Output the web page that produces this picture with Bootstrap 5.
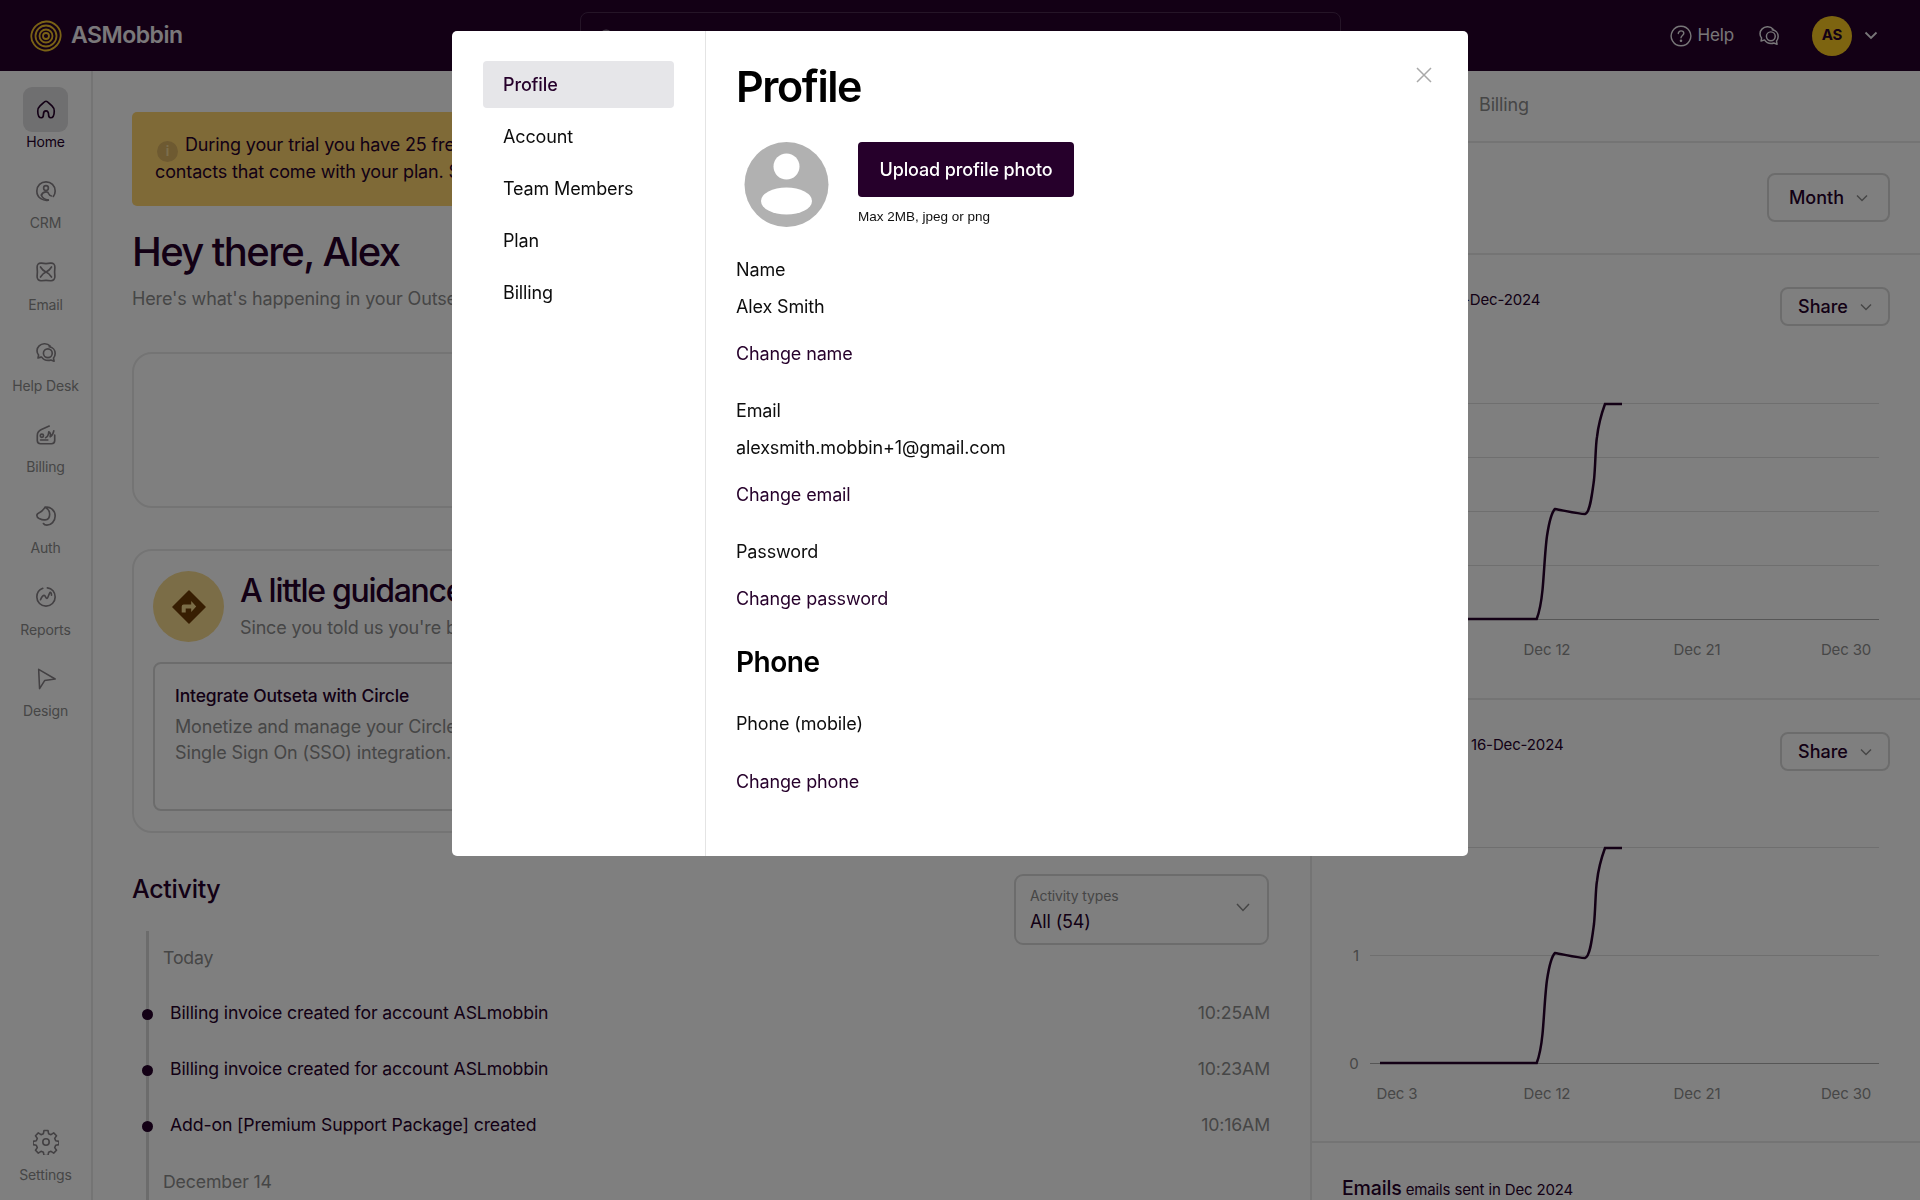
<!DOCTYPE html>
<html lang="en">
<head>
  <meta charset="UTF-8" />
  <meta name="viewport" content="width=device-width, initial-scale=1.0" />
  <title>ASMobbin - Profile</title>
  <link href="https://cdn.jsdelivr.net/npm/bootstrap@5.3.3/dist/css/bootstrap.min.css" rel="stylesheet">
  <style>
    :root { --plum: #26002b; --line: #e9e9e9; --muted: #8c8c8c; }
    html, body { height: 100%; }
    body { font-family: Inter, "Liberation Sans", sans-serif; font-size: 18px; letter-spacing: -.14px; color: var(--plum); overflow: hidden; }
    .shell { height: 100vh; }

    /* top bar */
    .topbar { height: 71px; flex: none; background: var(--plum); color: #fff; padding: 0 42px 0 30px; }
    .brand-name { font-size: 23px; font-weight: 600; letter-spacing: -.5px; margin-left: 9px; color: #f4f0f4; }
    .search-box { position: absolute; left: 580px; top: 12px; width: 761px; height: 50px; border: 1px solid #4a2a4f; border-radius: 8px; padding: 0 16px; }
    .top-help { color: #f0edf0; margin-right: 24px; gap: 5px; font-size: 17px; }
    .top-avatar { width: 40px; height: 40px; border-radius: 50%; background: #fac820; color: #26002b; font-size: 15px; font-weight: 700; margin: 0 12px 0 32px; }

    /* left rail */
    .rail { width: 93px; flex: none; border-right: 2px solid var(--line); padding: 16px 0 15px; }
    .rail-item { height: 81.3px; color: var(--muted); font-size: 14px; line-height: 20.5px; }
    .rail-icon { width: 45px; height: 45px; border-radius: 9px; }
    .rail-item.is-active { color: var(--plum); }
    .rail-item.is-active .rail-icon { background: #dfdee0; color: var(--plum); }
    .rail-item svg { color: #878287; width: 22px; height: 22px; }
    .rail-item.is-active svg { color: var(--plum); }
    .rail-item.rail-last { height: 65px; }
    .rail-item.rail-last svg { width: 26px; height: 26px; }

    /* main column */
    .main-col { width: 1219px; flex: none; padding: 41px 40px 0 39px; border-right: 2px solid var(--line); overflow: hidden; }
    .trial-note { height: 94px; background: #ffd56e; border-radius: 5px; padding: 19px 23px 0; line-height: 27px; color: #26002b; }
    .note-dot { display: inline-flex; width: 21px; height: 21px; border-radius: 50%; background: #dcb463; color: #f7dc9a; font-size: 13px; font-weight: 700; line-height: 1; align-items: center; justify-content: center; vertical-align: -5px; margin: -4px 7px -4px 2px; }
    .hello { font-size: 40px; font-weight: 500; line-height: 48px; letter-spacing: -1.6px; margin: 22px 0 0; }
    .hello-sub { color: var(--muted); font-size: 18px; line-height: 24px; margin-top: 11px; }
    .blank-panel { height: 156px; margin-top: 41px; border: 2px solid var(--line); border-radius: 20px; }
    .guide-panel { height: 284px; margin-top: 41px; border: 2px solid var(--line); border-radius: 20px; padding: 20px 19px; }
    .guide-circle { width: 71px; height: 71px; border-radius: 50%; background: #f7da8e; margin-right: 16px; flex: none; }
    .guide-title { font-size: 32px; font-weight: 500; line-height: 40px; letter-spacing: -1.3px; }
    .guide-sub { color: var(--muted); font-size: 18px; line-height: 24px; margin-top: 5px; }
    .guide-card { height: 149px; margin-top: 20px; border: 2px solid #d9d9d9; border-radius: 8px; padding: 20px 20px; }
    .guide-card b { font-weight: 500; font-size: 17.5px; line-height: 24px; display: block; }
    .guide-card p { color: var(--muted); font-size: 18px; line-height: 26px; margin: 6px 0 0; white-space: nowrap; }
    .activity-row { margin-top: 41px; height: 71px; }
    .activity-title { font-size: 25px; font-weight: 500; letter-spacing: -.3px; line-height: 34px; margin-top: -2px; }
    .type-select { width: 255px; height: 71px; border: 2px solid #d9d9d9; border-radius: 9px; padding: 11px 14px; margin-right: 1px; position: relative; }
    .type-label { font-size: 14px; line-height: 18px; color: var(--muted); }
    .type-value { font-size: 18px; line-height: 24px; margin-top: 5px; }
    .type-chev { position: absolute; right: 17px; top: 27px; }
    .feed { margin: -14px 0 0 14px; padding-left: 14px; border-left: 3px solid #d9d9d9; height: 300px; }
    .feed-day { color: var(--muted); line-height: 24px; font-size: 17.7px; }
    .feed-first { padding-top: 15px; height: 54.5px; }
    .feed-next { padding-top: 16px; }
    .feed-row { height: 56px; position: relative; padding-left: 7px; color: #26002b; font-size: 17.7px; }
    .feed-row::before { content: ""; position: absolute; left: -21px; top: 50%; margin-top: -5px; width: 11px; height: 11px; border-radius: 50%; background: #26002b; }
    .feed-time { color: var(--muted); }

    /* right column */
    .side-col { flex: 1; min-width: 0; overflow: hidden; }
    .side-tabs { height: 72px; border-bottom: 2px solid var(--line); padding: 0 0 4px 167px; color: var(--muted); }
    .side-filter { height: 112px; border-bottom: 2px solid var(--line); padding: 30px 30px 0 0; }
    .pick-btn { border: 2px solid #d9d9d9; border-radius: 8px; font-size: 18px; font-weight: 500; color: #26002b; padding: 0; display: inline-flex; align-items: center; justify-content: center; gap: 12px; background: transparent; }
    .pick-month { width: 123px; height: 49px; }
    .pick-share { width: 110px; height: 39px; }
    .pick-btn svg { color: var(--muted); }
    .chart-block { height: 445px; border-bottom: 2px solid var(--line); padding: 32px 30px 0 32px; }
    .chart-head { height: 39px; color: #26002b; font-size: 15px; line-height: 26px; }
    .chart-svg { display: block; width: 609px; height: 280px; margin: 69px 0 0 -33px; }
    .chart-lower { height: 443px; }
    .chart-lower .chart-svg { margin-top: 68px; }
    .chart-svg text { font-family: Inter, "Liberation Sans", sans-serif; font-size: 15px; fill: #8e8e8e; }
    .mail-head { padding: 33px 0 0 30px; font-size: 15px; line-height: 24px; white-space: nowrap; }
    .mail-head b { font-size: 19.5px; font-weight: 500; }
    .head-first { margin-left: 113px; }
    .head-second { margin-left: 127px; }

    /* settings dialog */
    .settings-dialog { max-width: 1016px; margin: 31px auto 0; }
    .settings-dialog .modal-content { height: 825px; border: 0; border-radius: 5px; color: #000; position: relative; }
    .settings-nav { width: 254px; flex: none; border-right: 1px solid #e4e4e4; padding: 30px 31px 0 31px; }
    .settings-nav a { display: flex; align-items: center; height: 47px; margin-bottom: 5px; padding-left: 20px; color: #0c0c0c; font-size: 18px; text-decoration: none; border-radius: 4px; }
    .settings-nav a.is-current { background: #e6e6e9; color: var(--plum); font-weight: 500; }
    .settings-pane { padding: 29px 0 0 30px; }
    .pane-title { font-size: 43px; font-weight: 600; line-height: 52px; letter-spacing: -1.4px; margin: 0 0 30px; color: #000; }
    .photo-row { height: 85px; }
    .photo-circle { margin-left: 8px; width: 85px; height: 85px; flex: none; }
    .photo-side { margin-left: 29px; }
    .upload-btn { width: 216px; height: 55px; background: var(--plum); color: #fff; font-size: 18px; font-weight: 500; letter-spacing: -.14px; border: 0; border-radius: 4px; padding: 0; }
    .upload-btn:hover { background: var(--plum); color: #fff; }
    .photo-hint { font-family: "Liberation Sans", Arial, sans-serif; font-size: 13.5px; letter-spacing: 0; line-height: 16px; margin-top: 12px; color: #111; }
    .field-row { line-height: 24px; color: #0d0d0d; }
    .change-link { display: block; line-height: 24px; color: var(--plum); text-decoration: none; }
    .gap-31 { margin-top: 31px; } .gap-13 { margin-top: 13px; } .gap-23 { margin-top: 23px; }
    .gap-33 { margin-top: 33px; } .gap-34 { margin-top: 34px; }
    .phone-title { font-size: 28px; font-weight: 600; letter-spacing: -.5px; line-height: 34px; margin: 34px 0 0; color: #000; }
    .dialog-close { position: absolute; right: 36px; top: 36px; background: none; border: 0; padding: 0; line-height: 0; color: #a9a9a9; }
  </style>
</head>
<body>
  <div class="shell d-flex flex-column">
    <!-- top bar -->
    <header class="topbar d-flex align-items-center position-relative">
      <svg width="32" height="32" viewBox="0 0 32 32" fill="none" stroke="#f5c52a" stroke-width="1.8">
        <path d="M16 1.500c4-.2 8 1.600 11 4.600 3 3.200 4 6.800 3.600 10.600-.4 4.200-2.600 8-6 10.600-3.200 2.600-7 3.600-10.800 3-4-.6-7.600-2.800-9.800-6C1.600 21.200.8 17.400 1.600 13.600 2.400 9.800 4.600 6.600 8 4.200 10.400 2.600 13 1.600 16 1.500z"/>
        <circle cx="16" cy="16" r="10.500"/>
        <circle cx="16" cy="16" r="6.500"/>
        <circle cx="16" cy="16" r="3"/>
      </svg>
      <span class="brand-name">ASMobbin</span>
      <div class="search-box d-flex align-items-center">
        <svg width="20" height="20" viewBox="0 0 24 24" fill="none" stroke="#8b7a8e" stroke-width="2"><circle cx="11" cy="11" r="7"/><path d="M16 16l5 5"/></svg>
      </div>
      <div class="ms-auto d-flex align-items-center">
        <div class="top-help d-flex align-items-center">
          <svg width="22" height="22" viewBox="0 0 22 22" fill="none" stroke="currentColor" stroke-width="1.400"><path d="M11 1.200a9.800 9.800 0 1 1-.01 0z"/><path d="M8.300 8.600c0-1.600 1.200-2.700 2.800-2.700s2.700 1 2.700 2.400c0 2.200-2.800 2.300-2.800 4.500" stroke-linecap="round"/><circle cx="11" cy="15.800" r=".6" fill="currentColor"/></svg>
          <span>Help</span>
        </div>
        <svg width="22" height="22" viewBox="0 0 24 24" fill="none" stroke="#f0edf0" stroke-width="1.600" stroke-linejoin="round" stroke-linecap="round"><path d="M16.500 4.500C15 2.800 12.500 1.700 10 1.900 5.800 2.200 2.200 5.300 2.200 9.500c0 1.800.6 3.400 1.700 4.700l-.6 3.300 3.200-1"/><circle cx="14" cy="12.300" r="4.800"/><path d="M15.500 5.200c3.800.5 6.500 3.600 6.500 7.300 0 1.900-.6 3.600-1.800 5l.6 3.500-3.500-1.400c-1 .4-2 .5-3 .5-3 0-5.600-1.400-7-3.600"/></svg>
        <div class="top-avatar d-flex align-items-center justify-content-center">AS</div>
        <svg width="14" height="9" viewBox="0 0 14 9" fill="none" stroke="#f0edf0" stroke-width="1.800"><path d="M1.500 1.500L7 7l5.500-5.500"/></svg>
      </div>
    </header>

    <div class="d-flex flex-grow-1 overflow-hidden">
      <!-- left rail -->
      <nav class="rail d-flex flex-column align-items-stretch">
        <div class="rail-item is-active d-flex flex-column align-items-center">
          <div class="rail-icon d-flex align-items-center justify-content-center">
            <svg viewBox="0 0 24 24" fill="none" stroke="currentColor" stroke-width="1.800" stroke-linejoin="round" stroke-linecap="round"><path d="M12 2.500c1 0 2 .8 3.500 2.200l3 2.800c1.700 1.600 2.500 3 2.500 5.500 0 4-.8 7.500-4 7.500-2 0-2.200-1.500-2.200-3.500 0-2.200-.9-4-2.800-4s-2.800 1.800-2.800 4c0 2-.2 3.500-2.200 3.500-3.200 0-4-3.500-4-7.500 0-2.500.8-3.900 2.500-5.500l3-2.800c1.500-1.400 2.500-2.200 3.500-2.200z"/></svg>
          </div>
          <span>Home</span>
        </div>
        <div class="rail-item d-flex flex-column align-items-center">
          <div class="rail-icon d-flex align-items-center justify-content-center">
            <svg viewBox="0 0 24 24" fill="none" stroke="currentColor" stroke-width="1.800" stroke-linecap="round" stroke-linejoin="round"><path d="M14.500 22C9.500 23 2 20 2 12 2 6 6.500 2 12 2s10 4 10 10c0 2.500-.8 4.500-2 6"/><circle cx="12" cy="8.800" r="2.600"/><path d="M7 16.500c1-2.500 2.500-3.500 5-3.500 1.500 0 2.500.6 3 2 .5 1.200 1.500 2.500 3 2.500"/><path d="M7 16.500c.5 2 2.500 4.500 7.500 5.500"/></svg>
          </div>
          <span>CRM</span>
        </div>
        <div class="rail-item d-flex flex-column align-items-center">
          <div class="rail-icon d-flex align-items-center justify-content-center">
            <svg viewBox="0 0 24 24" fill="none" stroke="currentColor" stroke-width="1.800" stroke-linecap="round" stroke-linejoin="round"><path d="M7 2.300c3 .6 7 .6 10 0 3-.4 4.800 1.600 4.700 4.500-.4 3.500-.4 7 0 10 .2 3-1.700 5-4.700 4.700-3-.5-7-.5-10 0-3 .3-4.900-1.700-4.700-4.700.4-3 .4-6.500 0-10C2.200 3.900 4 1.900 7 2.300z"/><path d="M6 6.500c1.500 2.500 3.500 4.500 6 5.500 2.500-1 4.500-3 6-5.500"/><path d="M6 17.500c1.500-2.500 3.500-4.500 6-5.500 2.500 1 4.500 3 6 5.500"/></svg>
          </div>
          <span>Email</span>
        </div>
        <div class="rail-item d-flex flex-column align-items-center">
          <div class="rail-icon d-flex align-items-center justify-content-center">
            <svg viewBox="0 0 24 24" fill="none" stroke="currentColor" stroke-width="1.800" stroke-linejoin="round" stroke-linecap="round"><path d="M16.500 4.500C15 2.800 12.500 1.700 10 1.900 5.800 2.200 2.200 5.300 2.200 9.500c0 1.800.6 3.400 1.700 4.700l-.6 3.300 3.200-1"/><circle cx="14" cy="12.300" r="4.800"/><path d="M15.500 5.200c3.800.5 6.500 3.600 6.500 7.300 0 1.900-.6 3.600-1.800 5l.6 3.500-3.500-1.400c-1 .4-2 .5-3 .5-3 0-5.600-1.400-7-3.600"/></svg>
          </div>
          <span>Help Desk</span>
        </div>
        <div class="rail-item d-flex flex-column align-items-center">
          <div class="rail-icon d-flex align-items-center justify-content-center">
            <svg viewBox="0 0 24 24" fill="none" stroke="currentColor" stroke-width="1.800" stroke-linejoin="round" stroke-linecap="round"><path d="M15.500 2.200L7 6C4.500 7.200 2.500 9 2.500 12.500V18c0 2.200 1.200 3.500 3.500 3.500h12c2.200 0 3.500-1.300 3.500-3.500v-6"/><circle cx="7.500" cy="12.800" r="1.800"/><path d="M11.500 15c2.200-.8 3.300-2.800 3.500-6.500 1.800.8 2.300 2.800 1.500 5.500 2-1.200 3.500-3.800 4-6.500"/><path d="M6 17.500h8"/></svg>
          </div>
          <span>Billing</span>
        </div>
        <div class="rail-item d-flex flex-column align-items-center">
          <div class="rail-icon d-flex align-items-center justify-content-center">
            <svg viewBox="0 0 24 24" fill="none" stroke="currentColor" stroke-width="1.800" stroke-linecap="round" stroke-linejoin="round"><path d="M11 2.500c5.500-1.200 11 3.200 11 9.500 0 5.800-4.500 10-9 10-1.800 0-3.200-.7-3.800-1.800"/><path d="M11 2.500c3 1.500 5 4.300 5 7.500 0 3.500-2 6-5 6.200-2 .2-4.500-.5-6.500-1.500C2.800 13.800 2 12.800 2 11.500 2 9.800 3.800 8.800 5.500 8 7.800 7 9 5 11 2.500z"/></svg>
          </div>
          <span>Auth</span>
        </div>
        <div class="rail-item d-flex flex-column align-items-center">
          <div class="rail-icon d-flex align-items-center justify-content-center">
            <svg viewBox="0 0 24 24" fill="none" stroke="currentColor" stroke-width="1.800" stroke-linecap="round" stroke-linejoin="round"><path d="M13.500 2C18.500 2.500 22 6.500 22 12c0 5.500-4.500 10-10 10S2 17.500 2 12C2 7.500 4.500 4 8.500 2.500"/><path d="M6 15c1-2.500 2.500-4.800 4-4.800 1.500 0 1.500 3.300 3 3.300s2-5 3.300-6.500c1.200-.8 1.700 1.500 1.700 3"/></svg>
          </div>
          <span>Reports</span>
        </div>
        <div class="rail-item d-flex flex-column align-items-center">
          <div class="rail-icon d-flex align-items-center justify-content-center">
            <svg viewBox="0 0 24 24" fill="none" stroke="currentColor" stroke-width="1.700" stroke-linejoin="round"><path d="M4 1.500l18 10.500-11.500 1.700L5 22.500z"/></svg>
          </div>
          <span>Design</span>
        </div>
        <div class="rail-item rail-last mt-auto d-flex flex-column align-items-center">
          <div class="rail-icon d-flex align-items-center justify-content-center">
            <svg viewBox="0 0 26 26" fill="none" stroke="currentColor" stroke-width="1.600" stroke-linejoin="round"><circle cx="13" cy="13" r="3.200"/><path d="M11 1.500h4l.6 3.200 2.400 1 2.700-1.800 2.800 2.800-1.800 2.700 1 2.400 3.200.6v3.200l-3.200.6-1 2.400 1.800 2.700-2.800 2.800-2.700-1.800-2.400 1-.6 3.200h-4l-.6-3.200-2.400-1-2.700 1.800-2.800-2.800 1.800-2.700-1-2.400-3.200-.6v-3.200l3.200-.6 1-2.400-1.800-2.700 2.800-2.800 2.700 1.800 2.400-1z"/></svg>
          </div>
          <span>Settings</span>
        </div>
      </nav>

      <!-- main column -->
      <main class="main-col">
        <div class="trial-note">
          <span class="note-dot">i</span>During your trial you have 25 free contacts to try things out.<br>
          contacts that come with your plan. See your plan for details.
        </div>
        <h1 class="hello">Hey there, Alex</h1>
        <div class="hello-sub">Here's what's happening in your Outseta account.</div>
        <div class="blank-panel"></div>
        <div class="guide-panel">
          <div class="d-flex">
            <div class="guide-circle d-flex align-items-center justify-content-center">
              <svg width="34" height="34" viewBox="0 0 34 34"><path d="M17 1l16 16-16 16L1 17z" fill="#6f3c05" stroke="#6f3c05" stroke-linejoin="round" stroke-width="1.500"/><path d="M9.700 22.400v-6a2 2 0 0 1 2-2h7.500v-3.500l5 5.500-5 5.500v-3.500h-5.500v4z" fill="#f7da8e"/></svg>
            </div>
            <div>
              <div class="guide-title">A little guidance to get you going</div>
              <div class="guide-sub">Since you told us you're building a community</div>
            </div>
          </div>
          <div class="guide-card">
            <b>Integrate Outseta with Circle</b>
            <p>Monetize and manage your Circle community with<br>Single Sign On (SSO) integration.</p>
          </div>
        </div>
        <div class="activity-row d-flex justify-content-between align-items-start">
          <div class="activity-title">Activity</div>
          <div class="type-select">
            <div class="type-label">Activity types</div>
            <div class="type-value">All (54)</div>
            <svg class="type-chev" width="14" height="9" viewBox="0 0 14 9" fill="none" stroke="#8c8c8c" stroke-width="1.500"><path d="M1 1l6 6.500L13 1"/></svg>
          </div>
        </div>
        <div class="feed">
          <div class="feed-day feed-first">Today</div>
          <div class="feed-row d-flex justify-content-between align-items-center"><span>Billing invoice created for account ASLmobbin</span><span class="feed-time">10:25AM</span></div>
          <div class="feed-row d-flex justify-content-between align-items-center"><span>Billing invoice created for account ASLmobbin</span><span class="feed-time">10:23AM</span></div>
          <div class="feed-row d-flex justify-content-between align-items-center"><span>Add-on [Premium Support Package] created</span><span class="feed-time">10:16AM</span></div>
          <div class="feed-day feed-next">December 14</div>
        </div>
      </main>

      <!-- right column -->
      <aside class="side-col">
        <div class="side-tabs d-flex align-items-center"><span>Billing</span></div>
        <div class="side-filter d-flex justify-content-end">
          <button class="btn pick-btn pick-month" type="button">Month
            <svg width="12" height="8" viewBox="0 0 12 8" fill="none" stroke="currentColor" stroke-width="1.500"><path d="M1 1.500l5 5 5-5"/></svg>
          </button>
        </div>

        <section class="chart-block">
          <div class="chart-head d-flex justify-content-between">
            <span class="head-first">1-Dec-2024</span>
            <button class="btn pick-btn pick-share" type="button">Share
              <svg width="12" height="8" viewBox="0 0 12 8" fill="none" stroke="currentColor" stroke-width="1.500"><path d="M1 1.500l5 5 5-5"/></svg>
            </button>
          </div>
          <svg class="chart-svg" viewBox="1311 395 609 280">
            <g stroke="#dfdfdf" stroke-width="1"><path d="M1370 403.500H1879M1370 457.500H1879M1370 511.500H1879M1370 565.500H1879"/></g>
            <path d="M1370 619.500H1879" stroke="#adadad"/>
            <path d="M1380 619H1536.700C1539 613 1541 605 1542.500 590C1544 575 1545 550 1547 536C1548.500 526 1551 513 1555 509C1562 510 1578 514 1585 514C1590 513 1592 495 1594 480C1595.500 465 1595.500 445 1597 437C1598 428 1601 415 1605 404H1622" fill="none" stroke="#26002b" stroke-width="2.500"/>
            <text x="1397" y="655" text-anchor="middle">Dec 3</text>
            <text x="1547" y="655" text-anchor="middle">Dec 12</text>
            <text x="1697" y="655" text-anchor="middle">Dec 21</text>
            <text x="1846" y="655" text-anchor="middle">Dec 30</text>
          </svg>
        </section>

        <section class="chart-block chart-lower">
          <div class="chart-head d-flex justify-content-between">
            <span class="head-second">16-Dec-2024</span>
            <button class="btn pick-btn pick-share" type="button">Share
              <svg width="12" height="8" viewBox="0 0 12 8" fill="none" stroke="currentColor" stroke-width="1.500"><path d="M1 1.500l5 5 5-5"/></svg>
            </button>
          </div>
          <svg class="chart-svg" viewBox="1311 395 609 280">
            <g stroke="#dfdfdf" stroke-width="1"><path d="M1370 403.500H1879M1370 511.500H1879"/></g>
            <path d="M1370 619.500H1879" stroke="#adadad"/>
            <path d="M1380 619H1536.700C1539 613 1541 605 1542.500 590C1544 575 1545 550 1547 536C1548.500 526 1551 513 1555 509C1562 510 1578 514 1585 514C1590 513 1592 495 1594 480C1595.500 465 1595.500 445 1597 437C1598 428 1601 415 1605 404H1622" fill="none" stroke="#26002b" stroke-width="2.500"/>
            <text x="1356" y="517" text-anchor="middle">1</text>
            <text x="1354" y="625" text-anchor="middle">0</text>
            <text x="1397" y="655" text-anchor="middle">Dec 3</text>
            <text x="1547" y="655" text-anchor="middle">Dec 12</text>
            <text x="1697" y="655" text-anchor="middle">Dec 21</text>
            <text x="1846" y="655" text-anchor="middle">Dec 30</text>
          </svg>
        </section>

        <div class="mail-head"><b>Emails</b> emails sent in Dec 2024</div>
      </aside>
    </div>
  </div>

  <!-- profile dialog -->
  <div class="modal-backdrop show"></div>
  <div class="modal d-block" tabindex="-1">
    <div class="modal-dialog settings-dialog">
      <div class="modal-content flex-row">
        <nav class="settings-nav">
          <a class="is-current" href="#">Profile</a>
          <a href="#">Account</a>
          <a href="#">Team Members</a>
          <a href="#">Plan</a>
          <a href="#">Billing</a>
        </nav>
        <div class="settings-pane flex-grow-1">
          <h2 class="pane-title">Profile</h2>
          <div class="photo-row d-flex">
            <svg class="photo-circle" viewBox="0 0 85 85">
              <ellipse cx="42.500" cy="42.500" rx="42" ry="42.500" fill="#b1b1b1"/>
              <ellipse cx="42.500" cy="24.500" rx="13" ry="13" fill="#fff"/>
              <ellipse cx="42.500" cy="59" rx="25.500" ry="13.500" fill="#fff"/>
            </svg>
            <div class="photo-side">
              <button class="btn upload-btn" type="button">Upload profile photo</button>
              <div class="photo-hint">Max 2MB, jpeg or png</div>
            </div>
          </div>
          <div class="field-row gap-31">Name</div>
          <div class="field-row gap-13">Alex Smith</div>
          <a class="change-link gap-23" href="#">Change name</a>
          <div class="field-row gap-33">Email</div>
          <div class="field-row gap-13">alexsmith.mobbin+1@gmail.com</div>
          <a class="change-link gap-23" href="#">Change email</a>
          <div class="field-row gap-33">Password</div>
          <a class="change-link gap-23" href="#">Change password</a>
          <h3 class="phone-title">Phone</h3>
          <div class="field-row gap-33">Phone (mobile)</div>
          <a class="change-link gap-34" href="#">Change phone</a>
        </div>
        <button class="dialog-close" type="button" aria-label="Close">
          <svg width="16" height="16" viewBox="0 0 16 16" fill="none" stroke="currentColor" stroke-width="1.500"><path d="M1 1l14 14M15 1L1 15"/></svg>
        </button>
      </div>
    </div>
  </div>

  <script src="https://cdn.jsdelivr.net/npm/bootstrap@5.3.3/dist/js/bootstrap.bundle.min.js"></script>
</body>
</html>
